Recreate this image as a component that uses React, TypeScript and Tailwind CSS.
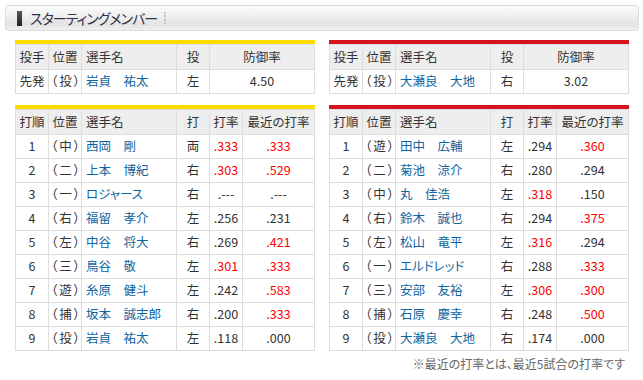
import React from 'react';

type Batter = {
  order: number;
  pos: string;
  name: string;
  hand: string;
  avg: string;
  avgHot: boolean;
  recent: string;
  recentHot: boolean;
};

type Team = {
  bar: string;
  pitcher: { name: string; hand: string; era: string };
  batters: Batter[];
};

const b = (
  order: number,
  pos: string,
  name: string,
  hand: string,
  avg: string,
  avgHot: boolean,
  recent: string,
  recentHot: boolean
): Batter => ({ order, pos, name, hand, avg, avgHot, recent, recentHot });

const teams: Team[] = [
  {
    bar: 'bg-[#ffdc00]',
    pitcher: { name: '岩貞　祐太', hand: '左', era: '4.50' },
    batters: [
      b(1, '（中）', '西岡　剛', '両', '.333', true, '.333', true),
      b(2, '（二）', '上本　博紀', '右', '.303', true, '.529', true),
      b(3, '（一）', 'ロジャース', '右', '.---', false, '.---', false),
      b(4, '（右）', '福留　孝介', '左', '.256', false, '.231', false),
      b(5, '（左）', '中谷　将大', '右', '.269', false, '.421', true),
      b(6, '（三）', '鳥谷　敬', '左', '.301', true, '.333', true),
      b(7, '（遊）', '糸原　健斗', '左', '.242', false, '.583', true),
      b(8, '（捕）', '坂本　誠志郎', '右', '.200', false, '.333', true),
      b(9, '（投）', '岩貞　祐太', '左', '.118', false, '.000', false),
    ],
  },
  {
    bar: 'bg-[#d7121f]',
    pitcher: { name: '大瀬良　大地', hand: '右', era: '3.02' },
    batters: [
      b(1, '（遊）', '田中　広輔', '左', '.294', false, '.360', true),
      b(2, '（二）', '菊池　涼介', '右', '.280', false, '.294', false),
      b(3, '（中）', '丸　佳浩', '左', '.318', true, '.150', false),
      b(4, '（右）', '鈴木　誠也', '右', '.294', false, '.375', true),
      b(5, '（左）', '松山　竜平', '左', '.316', true, '.294', false),
      b(6, '（一）', 'エルドレッド', '右', '.288', false, '.333', true),
      b(7, '（三）', '安部　友裕', '左', '.306', true, '.300', true),
      b(8, '（捕）', '石原　慶幸', '右', '.248', false, '.500', true),
      b(9, '（投）', '大瀬良　大地', '右', '.174', false, '.000', false),
    ],
  },
];

const th = 'border border-[#dddddd] bg-[#eeeeee] h-[25px] font-normal';
const td = 'border border-[#dddddd] h-[24px]';
const posCell = 'text-center whitespace-nowrap tracking-[2px] pl-[2px]';

const PitcherTable: React.FC<{ team: Team }> = ({ team }) => (
  <div className="w-[300px]">
    <div className={`h-[4px] ${team.bar}`} />
    <table className="w-full border-collapse table-fixed">
      <colgroup>
        <col className="w-[33px]" />
        <col className="w-[33px]" />
        <col className="w-[95px]" />
        <col className="w-[33px]" />
        <col />
      </colgroup>
      <thead>
        <tr>
          <th className={`${th} text-center`}>投手</th>
          <th className={`${th} text-center`}>位置</th>
          <th className={`${th} text-left pl-[4px]`}>選手名</th>
          <th className={`${th} text-center`}>投</th>
          <th className={`${th} text-center`}>防御率</th>
        </tr>
      </thead>
      <tbody>
        <tr>
          <td className={`${td} text-center`}>先発</td>
          <td className={`${td} ${posCell}`}>（投）</td>
          <td className={`${td} pl-[4px] text-[#0d64a0] whitespace-nowrap`}>{team.pitcher.name}</td>
          <td className={`${td} text-center`}>{team.pitcher.hand}</td>
          <td className={`${td} text-center`}>{team.pitcher.era}</td>
        </tr>
      </tbody>
    </table>
  </div>
);

const BattingTable: React.FC<{ team: Team }> = ({ team }) => (
  <div className="w-[300px]">
    <div className={`h-[4px] ${team.bar}`} />
    <table className="w-full border-collapse table-fixed">
      <colgroup>
        <col className="w-[33px]" />
        <col className="w-[33px]" />
        <col className="w-[95px]" />
        <col className="w-[33px]" />
        <col className="w-[33px]" />
        <col />
      </colgroup>
      <thead>
        <tr>
          <th className={`${th} text-center`}>打順</th>
          <th className={`${th} text-center`}>位置</th>
          <th className={`${th} text-left pl-[4px]`}>選手名</th>
          <th className={`${th} text-center`}>打</th>
          <th className={`${th} text-center`}>打率</th>
          <th className={`${th} text-center whitespace-nowrap`}>最近の打率</th>
        </tr>
      </thead>
      <tbody>
        {team.batters.map((p) => (
          <tr key={p.order}>
            <td className={`${td} text-center`}>{p.order}</td>
            <td className={`${td} ${posCell}`}>{p.pos}</td>
            <td className={`${td} pl-[4px] text-[#0d64a0] whitespace-nowrap`}>{p.name}</td>
            <td className={`${td} text-center`}>{p.hand}</td>
            <td className={`${td} text-center ${p.avgHot ? 'text-[#ff0000]' : ''}`}>{p.avg}</td>
            <td className={`${td} text-center ${p.recentHot ? 'text-[#ff0000]' : ''}`}>{p.recent}</td>
          </tr>
        ))}
      </tbody>
    </table>
  </div>
);

export default function App() {
  return (
    <div className="w-[643px] h-[380px] bg-white text-[#333333] text-[12.5px] leading-none font-['Noto_Sans_CJK_JP',sans-serif] [font-feature-settings:'palt']">
      <div className="pt-[5px] pl-[5px] pr-[4px]">
        <div className="h-[26px] flex items-center rounded-[3px] border border-[#dcdcdc] bg-[linear-gradient(to_bottom,#fbfbfb_0%,#f0f0f0_40%,#e3e3e3_75%,#efefef_100%)] pl-[11px]">
          <span className="w-[5px] h-[15px] bg-[linear-gradient(to_bottom,#555,#222)]" />
          <span className="ml-[8px] text-[14px] text-[#33304a] tracking-[-1px]">スターティングメンバー</span>
          <span className="ml-[7px] h-[12px] border-l-2 border-dotted border-[#c4c4c4]" />
        </div>
      </div>
      <div className="flex gap-[14px] pl-[15px] mt-[9px]">
        {teams.map((t, i) => (
          <PitcherTable key={i} team={t} />
        ))}
      </div>
      <div className="flex gap-[14px] pl-[15px] mt-[11px]">
        {teams.map((t, i) => (
          <BattingTable key={i} team={t} />
        ))}
      </div>
      <div className="w-[629px] text-right pr-[4px] mt-[7px] text-[12px] text-[#666666]">
        ※最近の打率とは、最近5試合の打率です
      </div>
    </div>
  );
}
